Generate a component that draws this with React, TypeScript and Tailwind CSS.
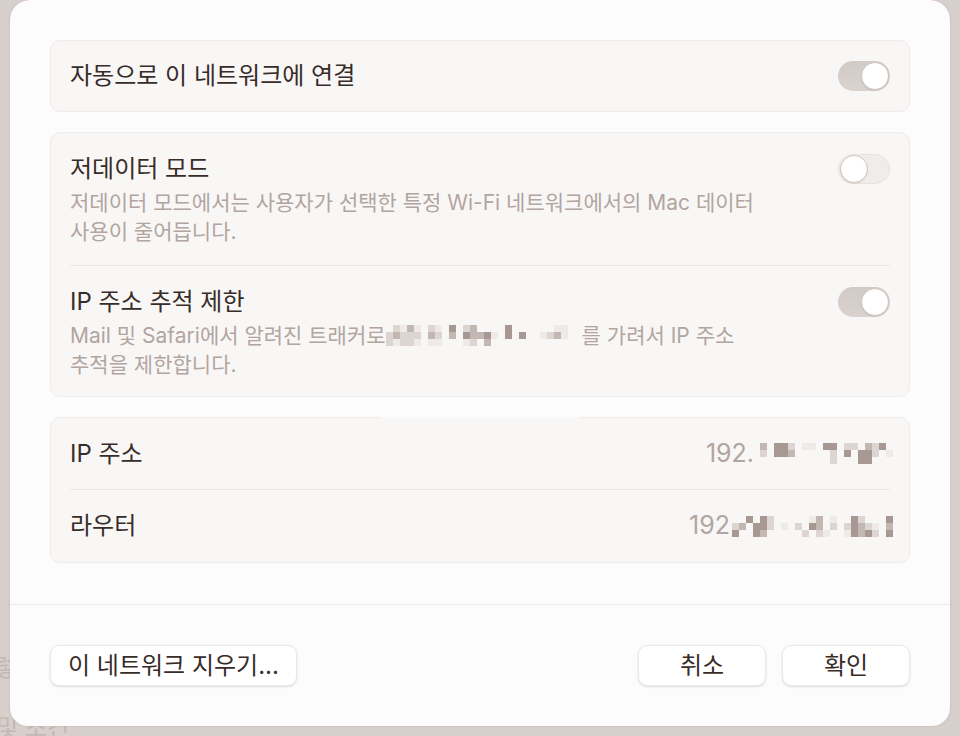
import React from 'react';

const PAL: Record<string, string> = {
  a: '#a89893',
  b: '#c3b7b3',
  c: '#ddd5d2',
  d: '#eeeae8',
};

// pixelated (censored) text block
function Mosaic({ rows, cell = 7 }: { rows: string[]; cell?: number }) {
  const w = rows[0].length * cell;
  const h = rows.length * cell;
  return (
    <svg width={w} height={h} className="shrink-0">
      {rows.map((r, y) =>
        r.split('').map((ch, x) =>
          PAL[ch] ? <rect key={`${x}-${y}`} x={x * cell} y={y * cell} width={cell} height={cell} fill={PAL[ch]} /> : null,
        ),
      )}
    </svg>
  );
}

function Toggle({ on }: { on: boolean }) {
  return (
    <div
      className={`w-[52px] h-[30px] rounded-full flex items-center px-[1px] shrink-0 ${
        on ? 'bg-gradient-to-b from-[#d2cac6] to-[#d9d2ce] justify-end' : 'bg-[#f0ecea] border border-[#e8e3e0] justify-start'
      }`}
    >
      <div className="w-[28px] h-[28px] rounded-full bg-white border border-[#cfc6c2] shadow-[0_1px_1px_rgba(0,0,0,0.08)]" />
    </div>
  );
}

const card = 'bg-[#f8f7f6] border border-[#efebe9] rounded-[10px]';
const btn =
  'h-[41px] rounded-[9px] bg-white border border-[#ece8e6] shadow-[0_1px_2px_rgba(60,40,30,0.15)] text-[24px] leading-none';

export default function App() {
  return (
    <div className="relative w-[960px] h-[736px] bg-[#d7cfcb] overflow-hidden font-['Inter','Noto_Sans_CJK_KR',sans-serif] text-[#382c29]">
      {/* faint text behind the sheet */}
      <div className="absolute left-[-6px] top-[650px] text-[24px] text-[#c2b8b4]">렇</div>
      <div className="absolute left-[-4px] top-[710px] text-[24px] text-[#c2b8b4]">및 조건</div>

      <div className="relative ml-[10px] w-[940px] h-[726px] bg-[#fdfcfc] rounded-b-[18px] rounded-t-[20px] flex flex-col shadow-[0_0_2px_rgba(0,0,0,0.15)]">
        <div className="flex flex-col gap-[20px] px-[40px] pt-[40px]">
          {/* auto join */}
          <div className={`${card} h-[72px] flex items-center justify-between px-[19px]`}>
            <span className="text-[24px] leading-none">자동으로 이 네트워크에 연결</span>
            <Toggle on />
          </div>

          {/* low data / ip tracking */}
          <div className={`${card} px-[19px] relative`}>
            <div className="flex justify-between pt-[21px] pb-[19px] border-b border-[#ece8e6]">
              <div className="flex flex-col">
                <span className="text-[24px] leading-[30px]">저데이터 모드</span>
                <p className="text-[21px] leading-[29px] text-[#b2a5a0] mt-[4px]">
                  저데이터 모드에서는 사용자가 선택한 특정 Wi-Fi 네트워크에서의 Mac 데이터
                  <br />
                  사용이 줄어듭니다.
                </p>
              </div>
              <Toggle on={false} />
            </div>
            <div className="flex justify-between pt-[21px] pb-[17px]">
              <div className="flex flex-col">
                <span className="text-[24px] leading-[30px]">IP 주소 추적 제한</span>
                <div className="text-[21px] leading-[29px] text-[#b2a5a0] mt-[4px]">
                  <div className="flex items-center">
                    <span>Mail 및 Safari에서 알려진 트래커로</span>
                    <Mosaic
                      rows={[
                        '.cdbd.cd.a.cb....a......dd..',
                        'cbccc.bc.b.abbad.a.a..dcbd..',
                        'cdccd.dd...dc.b.............',
                      ]}
                    />
                    <span>를 가려서 IP 주소</span>
                  </div>
                  <span>추적을 제한합니다.</span>
                </div>
              </div>
              <Toggle on />
            </div>
            <div className="absolute left-[329px] bottom-[-22px] w-[200px] h-[21px] bg-[#fdfcfc]" />
          </div>

          {/* ip info */}
          <div className={`${card} px-[19px]`}>
            <div className="h-[72px] flex items-center justify-between border-b border-[#ece8e6]">
              <span className="text-[24px]">IP 주소</span>
              <div className="flex items-center gap-[6px] mr-[-3px]">
                <span className="text-[25px] text-[#b2a5a0]">192.</span>
                <Mosaic
                  rows={[
                    'b.aac.dd.aa.cc.bca.',
                    'c.aab.....c.a.aac.d',
                    '..........c...aa...',
                  ]}
                />
              </div>
            </div>
            <div className="h-[72px] flex items-center justify-between">
              <span className="text-[24px]">라우터</span>
              <div className="flex items-center gap-[2px] mr-[-3px]">
                <span className="text-[25px] text-[#b2a5a0]">192</span>
                <Mosaic
                  rows={[
                    '..a.ac.....db.d..ac...a',
                    'cb.aac.d.c.ab.c.cabcd.b',
                    'a..ab.....c.cd..dabac.a',
                  ]}
                />
              </div>
            </div>
          </div>
        </div>

        <div className="mt-auto border-t border-[#eeeae8] h-[122px] flex items-center justify-between px-[40px]">
          <button className={`${btn} px-[17px]`}>이 네트워크 지우기...</button>
          <div className="flex gap-[16px]">
            <button className={`${btn} w-[128px]`}>취소</button>
            <button className={`${btn} w-[128px]`}>확인</button>
          </div>
        </div>
      </div>
    </div>
  );
}
